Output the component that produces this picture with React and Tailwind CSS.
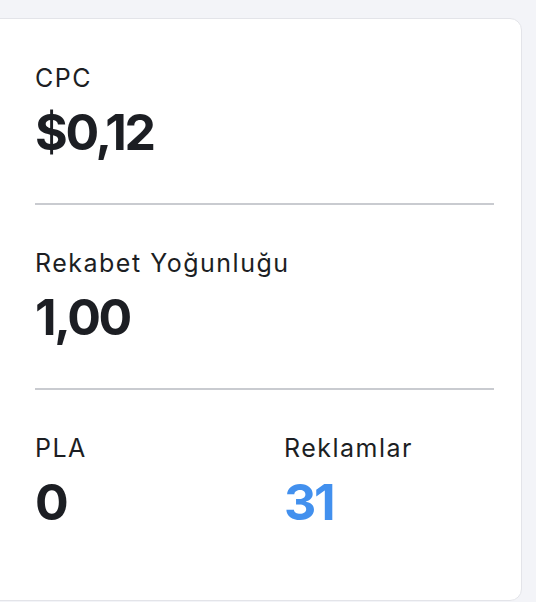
import React from 'react';

const Stat = ({ label, value, valueClass = 'text-[#1c1e23]' }) => (
  <div>
    <div className="text-[25px] leading-[32px] tracking-[1.5px] text-[#1c1e23]">{label}</div>
    <div className={`mt-[13px] text-[50px] leading-[50px] font-bold tracking-[-2.3px] ${valueClass}`}>
      {value}
    </div>
  </div>
);

const App = () => {
  return (
    <div className="min-h-[602px] w-[536px] bg-[#f3f4f8] pt-[18px] overflow-hidden" style={{ fontFamily: 'Inter, "Noto Sans", sans-serif' }}>
      <div className="-ml-[20px] w-[542px] h-[583px] bg-white border border-[#e3e4e9] rounded-[12px] pt-[43px] pl-[54px] pr-[27px]">
        <Stat label="CPC" value="$0,12" />
        <div className="mt-[46px] mb-[42px] h-[2px] bg-[#c9cbd0]" />
        <Stat label="Rekabet Yoğunluğu" value="1,00" />
        <div className="mt-[46px] mb-[42px] h-[2px] bg-[#c9cbd0]" />
        <div className="grid grid-cols-[249px_1fr]">
          <Stat label="PLA" value="0" />
          <Stat label="Reklamlar" value="31" valueClass="text-[#4290ee]" />
        </div>
      </div>
    </div>
  );
};

export default App;
